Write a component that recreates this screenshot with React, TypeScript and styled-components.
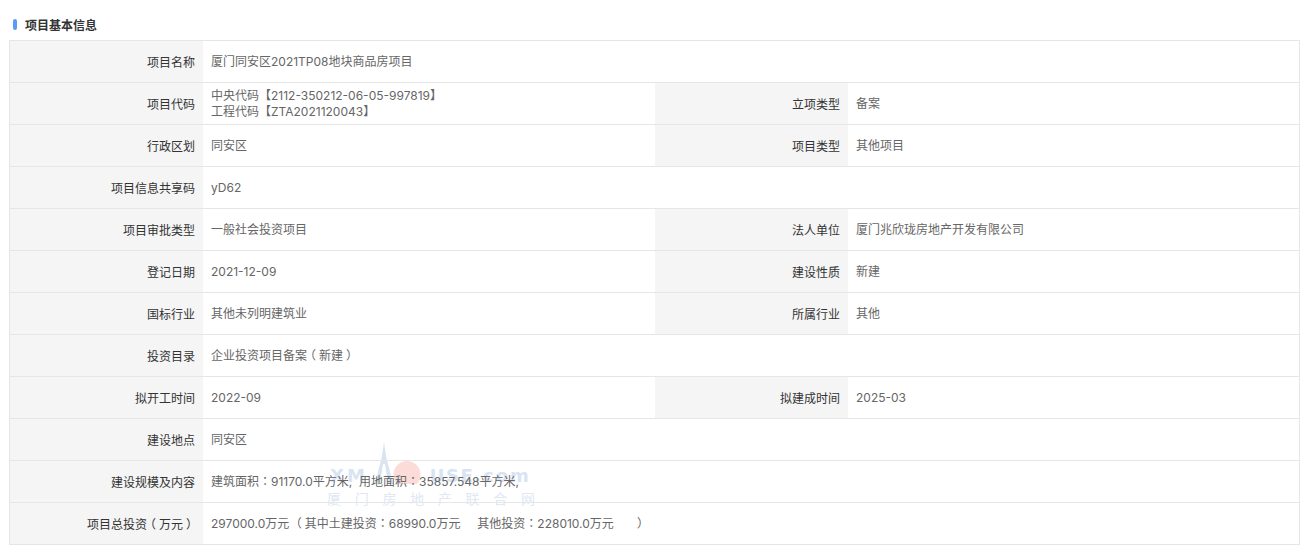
import React from 'react';
import styled, { createGlobalStyle } from 'styled-components';

const GlobalStyle = createGlobalStyle`
  html, body {
    margin: 0;
    padding: 0;
    background: #fff;
  }
  body {
    font-family: Inter, "Noto Sans CJK SC", sans-serif;
    font-size: 12px;
    color: #666;
  }
`;

const Page = styled.div`
  position: relative;
  width: 1308px;
  height: 552px;
  padding: 16px 9px 0 9px;
  box-sizing: border-box;
  overflow: hidden;
`;

const Heading = styled.h3`
  display: flex;
  align-items: center;
  gap: 8px;
  height: 16px;
  margin: 0 0 8px 4px;
  font-size: 12px;
  font-weight: 700;
  color: #333;
`;

const Bar = styled.i`
  display: block;
  width: 4px;
  height: 11px;
  border-radius: 2px;
  background: #5a9cf5;
`;

const Table = styled.div`
  position: relative;
  z-index: 1;
  display: grid;
  grid-template-columns: 193px 452px 193px 1fr;
  grid-auto-rows: 42px;
  border: 1px solid #e6e6e6;
  border-bottom: 0;
  width: 1291px;
  box-sizing: border-box;
`;

const Label = styled.div`
  display: flex;
  align-items: center;
  justify-content: flex-end;
  padding-right: 8px;
  background: #f5f5f5;
  color: #333;
  border-bottom: 1px solid #e6e6e6;
`;

const Value = styled.div<{ $wide?: boolean }>`
  display: flex;
  flex-direction: column;
  justify-content: center;
  padding-left: 8px;
  line-height: 16px;
  color: #666;
  border-bottom: 1px solid #e6e6e6;
  white-space: pre;
  grid-column: ${(p) => (p.$wide ? '2 / -1' : 'auto')};
`;

// full-width colon and brackets sit centred in the reference
const Punct = styled.span<{ $shift?: number }>`
  display: inline-block;
  font-family: "Noto Sans CJK TC", sans-serif;
  transform: translateX(${(p) => p.$shift ?? 0}px);
`;

const Watermark = styled.div`
  position: absolute;
  left: 327px;
  top: 442px;
  display: flex;
  flex-direction: column;
  gap: 6px;
  width: 212px;
`;

const MarkRow = styled.div`
  display: flex;
  align-items: flex-end;
  height: 42px;
  padding-left: 3px;
`;

const MarkLatin = styled.span<{ $spacing: number }>`
  font-family: "DejaVu Sans", sans-serif;
  font-size: 18px;
  font-weight: 700;
  line-height: 16px;
  letter-spacing: ${(p) => p.$spacing}px;
  white-space: nowrap;
  color: #d9e4f2;
`;

const MarkName = styled.div`
  font-family: "Noto Sans CJK SC", sans-serif;
  font-size: 14px;
  line-height: 16px;
  letter-spacing: 13.7px;
  white-space: nowrap;
  color: #dfe8f3;
`;

const Logo = () => (
  <svg width="62" height="42" viewBox="0 0 62 42">
    <path d="M29.4 42 A13.5 13.5 0 1 1 48.6 42 Z" fill="#fbdcd9" />
    <path
      d="M16 0 L14 14 L7 42 L12 42 L15 22 L17 22 L20 42 L25 42 L18 14 Z"
      fill="#d9e4f2"
    />
  </svg>
);

const shifts: Record<string, number> = { '（': -3, '）': 3 };

const withPunct = (text: string) =>
  text.split(/([：（）])/).map((part, i) =>
    i % 2 ? (
      <Punct key={i} $shift={shifts[part]}>
        {part}
      </Punct>
    ) : (
      part
    ),
  );

type Row = [string, React.ReactNode, string?, React.ReactNode?];

const rows: Row[] = [
  ['项目名称', '厦门同安区2021TP08地块商品房项目'],
  [
    '项目代码',
    <>
      <span>中央代码【2112-350212-06-05-997819】</span>
      <span>工程代码【ZTA2021120043】</span>
    </>,
    '立项类型',
    '备案',
  ],
  ['行政区划', '同安区', '项目类型', '其他项目'],
  ['项目信息共享码', 'yD62'],
  ['项目审批类型', '一般社会投资项目', '法人单位', '厦门兆欣珑房地产开发有限公司'],
  ['登记日期', '2021-12-09', '建设性质', '新建'],
  ['国标行业', '其他未列明建筑业', '所属行业', '其他'],
  ['投资目录', <span>{withPunct('企业投资项目备案（新建）')}</span>],
  ['拟开工时间', '2022-09', '拟建成时间', '2025-03'],
  ['建设地点', '同安区'],
  ['建设规模及内容', <span>{withPunct('建筑面积：91170.0平方米,  用地面积：35857.548平方米,')}</span>],
  [
    '项目总投资（万元）',
    <span>{withPunct('297000.0万元 （其中土建投资：68990.0万元     其他投资：228010.0万元      ）')}</span>,
  ],
];

export default function App() {
  return (
    <Page>
      <GlobalStyle />
      <Heading>
        <Bar />
        项目基本信息
      </Heading>
      <Table>
        {rows.map(([label, value, label2, value2]) => (
          <React.Fragment key={label}>
            <Label>
              <span>{withPunct(label)}</span>
            </Label>
            <Value $wide={!label2}>{value}</Value>
            {label2 && <Label>{label2}</Label>}
            {label2 && <Value>{value2}</Value>}
          </React.Fragment>
        ))}
      </Table>
      <Watermark>
        <MarkRow>
          <MarkLatin $spacing={3}>XM</MarkLatin>
          <Logo />
          <MarkLatin $spacing={1.5}>USE</MarkLatin>
          <MarkLatin $spacing={2}>.com</MarkLatin>
        </MarkRow>
        <MarkName>厦门房地产联合网</MarkName>
      </Watermark>
    </Page>
  );
}
